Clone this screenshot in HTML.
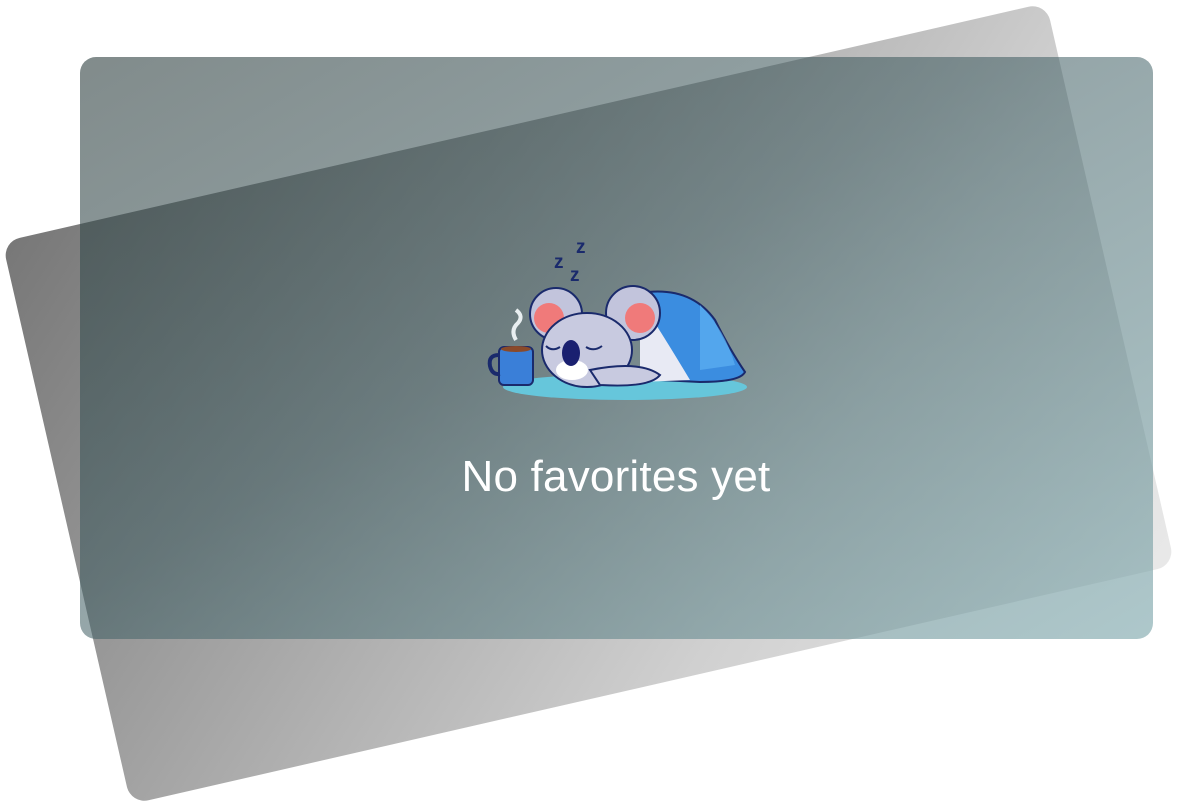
<!DOCTYPE html>
<html><head><style>
html,body{margin:0;padding:0;background:#fff;width:1178px;height:809px;overflow:hidden;position:relative;font-family:"Liberation Sans",sans-serif}
.back{position:absolute;left:53px;top:115px;width:1071px;height:577px;border-radius:18px;transform:rotate(-12.9deg);background:linear-gradient(135deg,rgba(85,85,85,0.8),rgba(170,170,170,0.55) 70%,rgba(200,200,200,0.4));}
.front{position:absolute;left:80px;top:57px;width:1073px;height:582px;border-radius:16px;background:linear-gradient(150deg,rgba(45,62,62,0.6),rgba(60,90,95,0.55) 45%,rgba(130,170,175,0.65));}
.t{position:absolute;left:0;width:1232px;top:452px;text-align:center;color:#fff;font-size:44px;letter-spacing:0.2px}
svg{position:absolute;left:0;top:0}
</style></head><body>
<div class="back"></div>
<div class="front"></div>
<svg width="1178" height="809">
<ellipse cx="625" cy="387" rx="122" ry="13" fill="#66c6db"/>
<path d="M640 293 Q690 285 715 320 Q730 350 745 372 Q740 382 700 382 L660 380 Z" fill="#3b8de0" stroke="#1a2a6c" stroke-width="2"/>
<path d="M700 305 Q725 330 735 365 L700 370 Z" fill="#5eb0f2" opacity="0.7"/>
<path d="M640 300 Q660 330 690 380 L640 382 Z" fill="#e8eaf4"/>
<circle cx="556" cy="314" r="26" fill="#c2c4dc" stroke="#1a2a6c" stroke-width="2"/>
<circle cx="549" cy="318" r="15" fill="#f07a7a"/>
<circle cx="633" cy="313" r="27" fill="#c2c4dc" stroke="#1a2a6c" stroke-width="2"/>
<circle cx="640" cy="318" r="15" fill="#f07a7a"/>
<ellipse cx="587" cy="350" rx="45" ry="37" fill="#c8cae0" stroke="#1a2a6c" stroke-width="2"/>
<path d="M590 370 Q640 360 660 375 Q650 388 600 385 Z" fill="#c8cae0" stroke="#1a2a6c" stroke-width="2"/>
<ellipse cx="572" cy="370" rx="16" ry="10" fill="#fff"/>
<ellipse cx="571" cy="353" rx="9" ry="13" fill="#1a2070"/>
<path d="M546 346 Q552 352 560 347 M586 347 Q594 352 602 346" stroke="#1a2a6c" stroke-width="2" fill="none"/>
<rect x="499" y="347" width="34" height="38" rx="5" fill="#3a7fd8" stroke="#1a2a6c" stroke-width="2"/>
<ellipse cx="516" cy="349" rx="15" ry="3" fill="#8a4a2a"/>
<path d="M499 355 Q488 355 490 366 Q492 375 500 374" stroke="#1a2a6c" stroke-width="4" fill="none"/>
<path d="M516 340 Q510 330 518 323 Q524 316 516 310" stroke="#e8eef0" stroke-width="4" fill="none"/>
<g fill="#1a2a6c" font-family="Liberation Sans" font-weight="bold" font-size="19">
<text x="554" y="268">z</text><text x="576" y="253">z</text><text x="570" y="281">z</text></g>
</svg>
<div class="t">No favorites yet</div>
</body></html>
